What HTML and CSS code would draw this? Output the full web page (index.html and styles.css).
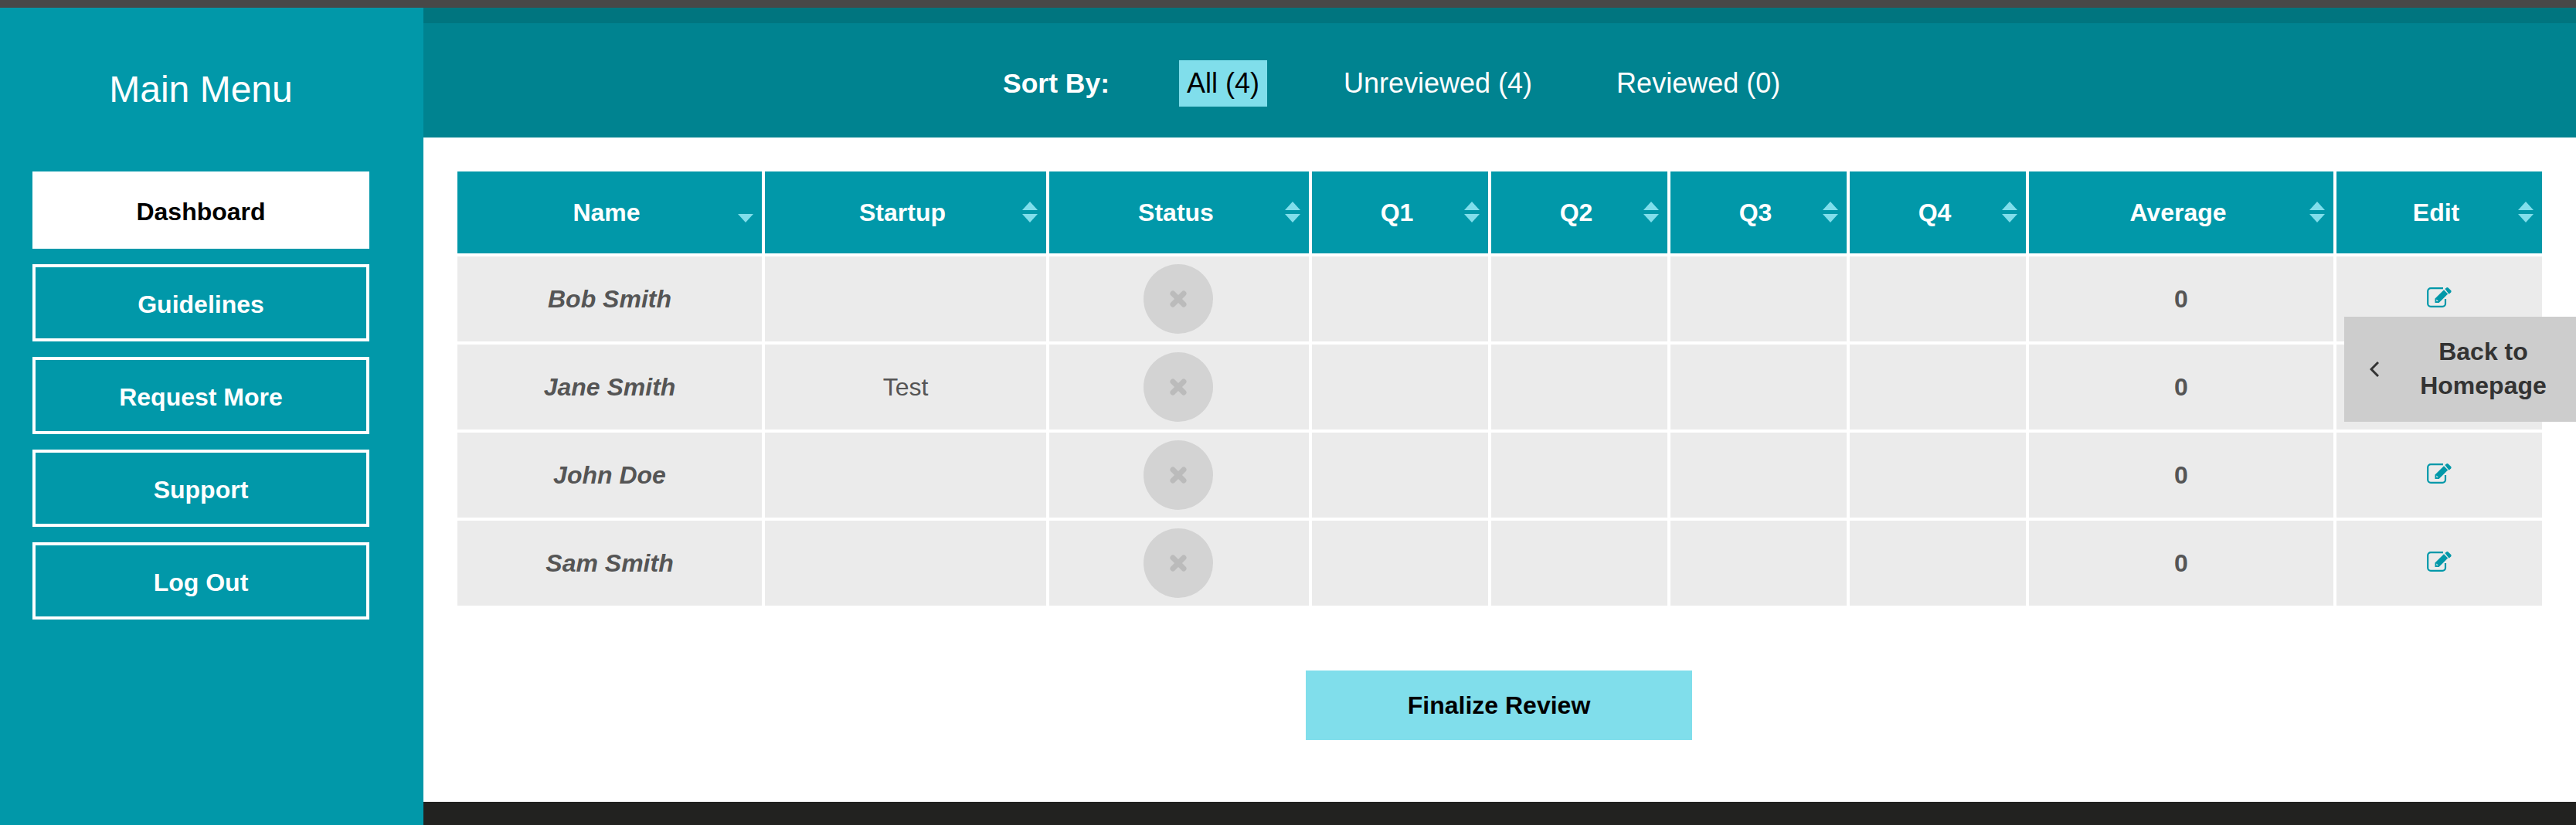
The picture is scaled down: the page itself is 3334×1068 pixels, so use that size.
FILE: index.html
```html
<!DOCTYPE html>
<html lang="en">
<head>
  <meta charset="UTF-8" />
  <meta name="viewport" content="width=device-width, initial-scale=1.0"/>
  <title>Dashboard</title>
  <link rel="stylesheet" href="styles.css">
</head>
<body>
  <div class="top-bar"></div>
  <div class="page">
    <nav class="sidebar">
      <h2 class="menu-title">Main Menu</h2>
      <a class="menu-link active">Dashboard</a>
      <a class="menu-link">Guidelines</a>
      <a class="menu-link">Request More</a>
      <a class="menu-link">Support</a>
      <a class="menu-link">Log Out</a>
    </nav>

    <div class="main">
      <div class="sort-bar">
        <span class="sort-label">Sort By:</span>
        <a class="sort-option selected">All (4)</a>
        <a class="sort-option">Unreviewed (4)</a>
        <a class="sort-option">Reviewed (0)</a>
      </div>

      <div class="content">
        <table class="review-table">
          <colgroup>
            <col class="col-name">
            <col class="col-startup">
            <col class="col-status">
            <col class="col-q">
            <col class="col-q">
            <col class="col-q">
            <col class="col-q">
            <col class="col-average">
            <col class="col-edit">
          </colgroup>
          <thead>
            <tr>
              <th>Name<span class="sort-icons"><i class="arrow-down"></i></span></th>
              <th>Startup<span class="sort-icons"><i class="arrow-up"></i><i class="arrow-down"></i></span></th>
              <th>Status<span class="sort-icons"><i class="arrow-up"></i><i class="arrow-down"></i></span></th>
              <th>Q1<span class="sort-icons"><i class="arrow-up"></i><i class="arrow-down"></i></span></th>
              <th>Q2<span class="sort-icons"><i class="arrow-up"></i><i class="arrow-down"></i></span></th>
              <th>Q3<span class="sort-icons"><i class="arrow-up"></i><i class="arrow-down"></i></span></th>
              <th>Q4<span class="sort-icons"><i class="arrow-up"></i><i class="arrow-down"></i></span></th>
              <th>Average<span class="sort-icons"><i class="arrow-up"></i><i class="arrow-down"></i></span></th>
              <th>Edit<span class="sort-icons"><i class="arrow-up"></i><i class="arrow-down"></i></span></th>
            </tr>
          </thead>
          <tbody>
            <tr>
              <td class="person">Bob Smith</td>
              <td></td>
              <td><span class="status-dot"><svg width="22" height="22" viewBox="0 0 22 22"><path d="M4 4L18 18M18 4L4 18"/></svg></span></td>
              <td></td><td></td><td></td><td></td>
              <td class="average">0</td>
              <td><svg class="edit-icon" viewBox="0 0 32 26"><path class="edit-box" d="M21 1.2H5A3.8 3.8 0 0 0 1.2 5V21A3.8 3.8 0 0 0 5 24.8H20.2A3.8 3.8 0 0 0 24 21V15"/><path class="edit-pencil" fill-rule="evenodd" d="M10.5 14.5L22 3.2L27.2 8.4L15.6 20H10.5ZM12.4 15.6V18H14.8ZM23.4 2L25.2.4Q26.4-.4 27.6.4L31.2 4Q32 5.2 31.2 6.4L28.6 8.8Z"/></svg></td>
            </tr>
            <tr>
              <td class="person">Jane Smith</td>
              <td>Test</td>
              <td><span class="status-dot"><svg width="22" height="22" viewBox="0 0 22 22"><path d="M4 4L18 18M18 4L4 18"/></svg></span></td>
              <td></td><td></td><td></td><td></td>
              <td class="average">0</td>
              <td><svg class="edit-icon" viewBox="0 0 32 26"><path class="edit-box" d="M21 1.2H5A3.8 3.8 0 0 0 1.2 5V21A3.8 3.8 0 0 0 5 24.8H20.2A3.8 3.8 0 0 0 24 21V15"/><path class="edit-pencil" fill-rule="evenodd" d="M10.5 14.5L22 3.2L27.2 8.4L15.6 20H10.5ZM12.4 15.6V18H14.8ZM23.4 2L25.2.4Q26.4-.4 27.6.4L31.2 4Q32 5.2 31.2 6.4L28.6 8.8Z"/></svg></td>
            </tr>
            <tr>
              <td class="person">John Doe</td>
              <td></td>
              <td><span class="status-dot"><svg width="22" height="22" viewBox="0 0 22 22"><path d="M4 4L18 18M18 4L4 18"/></svg></span></td>
              <td></td><td></td><td></td><td></td>
              <td class="average">0</td>
              <td><svg class="edit-icon" viewBox="0 0 32 26"><path class="edit-box" d="M21 1.2H5A3.8 3.8 0 0 0 1.2 5V21A3.8 3.8 0 0 0 5 24.8H20.2A3.8 3.8 0 0 0 24 21V15"/><path class="edit-pencil" fill-rule="evenodd" d="M10.5 14.5L22 3.2L27.2 8.4L15.6 20H10.5ZM12.4 15.6V18H14.8ZM23.4 2L25.2.4Q26.4-.4 27.6.4L31.2 4Q32 5.2 31.2 6.4L28.6 8.8Z"/></svg></td>
            </tr>
            <tr>
              <td class="person">Sam Smith</td>
              <td></td>
              <td><span class="status-dot"><svg width="22" height="22" viewBox="0 0 22 22"><path d="M4 4L18 18M18 4L4 18"/></svg></span></td>
              <td></td><td></td><td></td><td></td>
              <td class="average">0</td>
              <td><svg class="edit-icon" viewBox="0 0 32 26"><path class="edit-box" d="M21 1.2H5A3.8 3.8 0 0 0 1.2 5V21A3.8 3.8 0 0 0 5 24.8H20.2A3.8 3.8 0 0 0 24 21V15"/><path class="edit-pencil" fill-rule="evenodd" d="M10.5 14.5L22 3.2L27.2 8.4L15.6 20H10.5ZM12.4 15.6V18H14.8ZM23.4 2L25.2.4Q26.4-.4 27.6.4L31.2 4Q32 5.2 31.2 6.4L28.6 8.8Z"/></svg></td>
            </tr>
          </tbody>
        </table>

        <div class="finalize-row">
          <button class="finalize-btn">Finalize Review</button>
        </div>
      </div>

      <div class="footer"></div>

      <a class="back-tab">
        <svg class="back-chevron" width="12" height="20" viewBox="0 0 12 20"><path d="M11 1L2 10L11 19"/></svg>
        <span class="back-text">Back to Homepage</span>
      </a>
    </div>
  </div>
</body>
</html>
```

FILE: styles.css
```css
* {
  box-sizing: border-box;
}

html, body {
  height: 1068px;
  overflow: hidden;
}

body {
  margin: 0;
  display: flex;
  flex-direction: column;
  font-family: "Liberation Sans", Arial, sans-serif;
  font-size: 32px;
  background: white;
}

.top-bar {
  height: 10px;
  background: #484848;
}

.page {
  flex: 1;
  display: flex;
  min-height: 0;
}

/* sidebar */
.sidebar {
  width: 548px;
  padding: 0 70px 0 42px;
  display: flex;
  flex-direction: column;
  gap: 20px;
  background: #0198a9;
}

.menu-title {
  margin: 78px 0 58px;
  height: 56px;
  font-size: 48px;
  font-weight: normal;
  line-height: 56px;
  text-align: center;
  color: white;
}

.menu-link {
  height: 100px;
  padding-top: 4px;
  display: flex;
  align-items: center;
  justify-content: center;
  border: 4px solid white;
  font-weight: bold;
  color: white;
}

.menu-link.active {
  background: white;
  color: black;
}

/* main column */
.main {
  position: relative;
  flex: 1;
  min-height: 0;
  display: flex;
  flex-direction: column;
}

.sort-bar {
  height: 168px;
  padding: 48px 0 0 750px;
  display: flex;
  align-items: flex-start;
  border-top: 20px solid #00757f;
  background: #008390;
  font-size: 36px;
  color: white;
}

.sort-label {
  width: 228px;
  font-size: 35.5px;
  line-height: 60px;
  font-weight: bold;
}

.sort-option {
  height: 60px;
  margin-right: 89px;
  padding: 0 10px;
  line-height: 60px;
}

.sort-option.selected {
  background: #80deeb;
  color: black;
}

.content {
  flex: 1;
  padding-top: 40px;
}

/* table */
.review-table {
  width: 2706px;
  margin-left: 40px;
  table-layout: fixed;
  border-collapse: separate;
  border-spacing: 4px;
}

.col-name { width: 394px; }
.col-startup { width: 364px; }
.col-status { width: 336px; }
.col-q { width: 228px; }
.col-average { width: 394px; }
.col-edit { width: 266px; }

.review-table th {
  position: relative;
  height: 106px;
  padding: 0 8px 0 0;
  background: #0198a9;
  font-weight: bold;
  color: white;
}

.review-table td {
  height: 110px;
  padding: 0;
  background: #ebebeb;
  text-align: center;
  color: #555;
}

.review-table td.person {
  font-weight: bold;
  font-style: italic;
}

.review-table td.average {
  font-weight: bold;
}

.sort-icons i {
  position: absolute;
  right: 11px;
  width: 0;
  height: 0;
  border-left: 10px solid transparent;
  border-right: 10px solid transparent;
}

.sort-icons .arrow-up {
  top: 39px;
  border-bottom: 11px solid #80deeb;
}

.sort-icons .arrow-down {
  top: 55px;
  border-top: 11px solid #80deeb;
}

.status-dot {
  width: 90px;
  height: 90px;
  margin-left: 122px;
  display: flex;
  align-items: center;
  justify-content: center;
  border-radius: 50%;
  background: #d3d3d3;
}

.status-dot path {
  fill: none;
  stroke: #bbb;
  stroke-width: 7;
  stroke-linecap: round;
}

.edit-icon {
  display: block;
  width: 32px;
  height: 26px;
  margin: -4px auto 0;
}

.edit-box {
  fill: none;
  stroke: #0198a9;
  stroke-width: 2.2;
}

.edit-pencil {
  fill: #0198a9;
}

.finalize-row {
  margin-top: 80px;
  padding-right: 2px;
  display: flex;
  justify-content: center;
}

.finalize-btn {
  width: 500px;
  height: 90px;
  padding: 0;
  border: none;
  background: #80deeb;
  font-family: inherit;
  font-size: 32px;
  font-weight: bold;
  color: black;
}

.footer {
  height: 30px;
  background: #222220;
}

/* tab stuck to the right edge, over the table */
.back-tab {
  position: absolute;
  top: 400px;
  right: 0;
  width: 300px;
  height: 136px;
  padding-left: 33px;
  display: flex;
  align-items: center;
  background: #cdcdcd;
  font-weight: bold;
  color: #333;
}

.back-chevron {
  flex-shrink: 0;
}

.back-chevron path {
  fill: none;
  stroke: #333;
  stroke-width: 3;
}

.back-text {
  width: 220px;
  margin-left: 25px;
  padding-bottom: 3px;
  line-height: 44px;
  text-align: center;
}
```
